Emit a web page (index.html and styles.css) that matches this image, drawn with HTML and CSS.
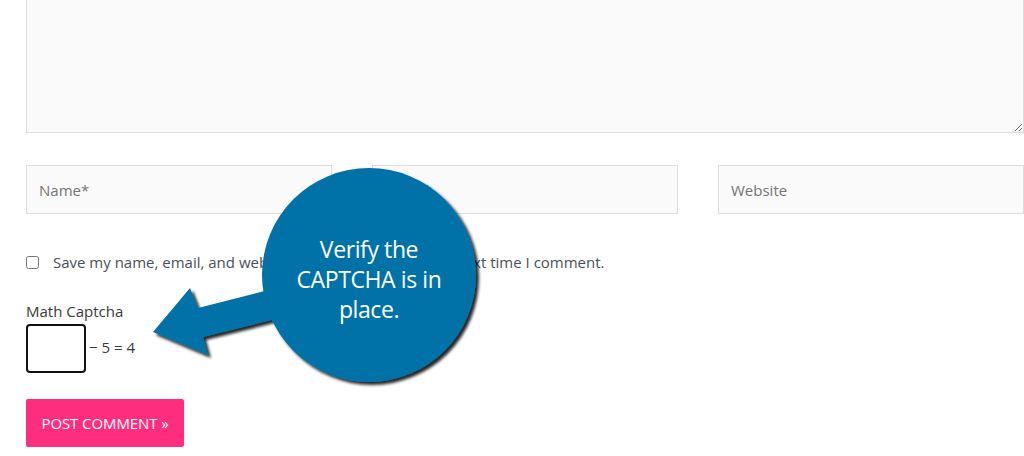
FILE: index.html
```html
<!DOCTYPE html>
<html>
<head>
<meta charset="utf-8">
<link rel="stylesheet" href="styles.css">
</head>
<body>
<div class="page">
  <form class="comment-form">
    <textarea class="comment-box"></textarea>
    <div class="fields">
      <input class="field" type="text" placeholder="Name*">
      <input class="field" type="text" placeholder="Email*">
      <input class="field" type="text" placeholder="Website">
    </div>
    <label class="consent">
      <input type="checkbox" class="check">
      <span>Save my name, email, and website in this browser for the next time I comment.</span>
    </label>
    <div class="captcha">
      <div class="captcha-label">Math Captcha</div>
      <div class="captcha-row">
        <input class="captcha-input" type="text">
        <span class="captcha-eq">&minus; 5 = 4</span>
      </div>
    </div>
    <button type="button" class="submit">POST COMMENT &raquo;</button>
  </form>

  <div class="callout">
    <svg class="callout-art" width="1024" height="456" viewBox="0 0 1024 456">
      <defs>
        <filter id="shadow" x="-20%" y="-20%" width="140%" height="140%">
          <feDropShadow dx="3" dy="3" stdDeviation="1.6" flood-color="#000" flood-opacity="0.85"/>
        </filter>
      </defs>
      <g filter="url(#shadow)" fill="#0072a8">
        <polygon points="153,332 190,288 198,308 300,282 300,313 203,337 208,355"/>
        <circle cx="369" cy="275" r="107"/>
      </g>
    </svg>
    <div class="callout-text">Verify the<br>CAPTCHA is in<br>place.</div>
  </div>
</div>
</body>
</html>
```

FILE: styles.css
```css
html, body {
  margin: 0;
  padding: 0;
  background: #ffffff;
  overflow: hidden;
}

.page {
  position: relative;
  width: 1024px;
  height: 456px;
  overflow: hidden;
  font-family: "Open Sans", "Liberation Sans", sans-serif;
  font-size: 15px;
  color: #4b4f58;
}

.comment-form {
  display: flex;
  flex-direction: column;
  align-items: flex-start;
  width: 998px;
  padding-left: 26px;
  margin-top: -40px;
}

.comment-box {
  box-sizing: border-box;
  width: 998px;
  height: 173px;
  margin: 0;
  background: #fafafa;
  border: 1px solid #dddddd;
  border-radius: 0;
  display: block;
  resize: both;
}

.fields {
  display: flex;
  gap: 40px;
  margin-top: 32px;
}

.field {
  box-sizing: border-box;
  width: 306px;
  height: 49px;
  margin: 0;
  padding: 0 12px;
  background: #fafafa;
  border: 1px solid #dddddd;
  border-radius: 0;
  font-family: "Open Sans", "Liberation Sans", sans-serif;
  font-size: 15px;
  color: #666666;
}

.field::placeholder {
  color: #757575;
  opacity: 1;
}

.consent {
  display: flex;
  align-items: center;
  gap: 14px;
  margin-top: 40px;
  height: 16px;
  line-height: 16px;
}

.check {
  width: 13px;
  height: 13px;
  margin: 0;
}

.captcha {
  margin-top: 30px;
}

.captcha-label {
  line-height: 22px;
  color: #3a3a3a;
}

.captcha-row {
  display: flex;
  align-items: center;
  gap: 3px;
  margin-top: 2px;
}

.captcha-input {
  box-sizing: border-box;
  width: 60px;
  height: 49px;
  margin: 0;
  border: 2px solid #111111;
  border-radius: 4px;
  background: #ffffff;
}

.captcha-eq {
  color: #3a3a3a;
  margin-top: -3px;
}

.submit {
  margin-top: 26px;
  box-sizing: border-box;
  width: 158px;
  height: 48px;
  border: none;
  border-radius: 2px;
  background: #ff2d7e;
  color: #ffffff;
  font-family: "Open Sans", "Liberation Sans", sans-serif;
  font-size: 15px;
  font-weight: 500;
  padding: 0;
  letter-spacing: -0.1px;
}

.callout {
  position: absolute;
  left: 0;
  top: 0;
  width: 1024px;
  height: 456px;
  pointer-events: none;
}

.callout-art {
  position: absolute;
  left: 0;
  top: 0;
}

.callout-text {
  position: absolute;
  left: 262px;
  top: 234px;
  width: 214px;
  text-align: center;
  color: #ffffff;
  font-family: "Open Sans", "Liberation Sans", sans-serif;
  font-size: 23px;
  line-height: 30px;
  letter-spacing: -0.4px;
}
```
